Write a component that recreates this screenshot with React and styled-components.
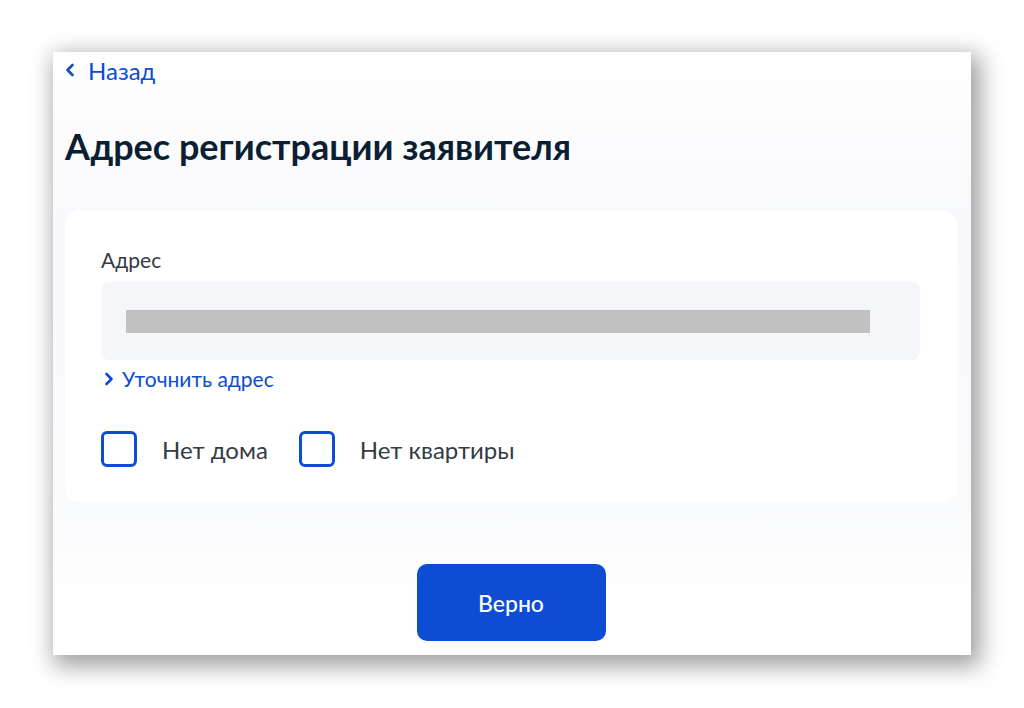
import React from 'react';
import styled, { createGlobalStyle } from 'styled-components';

const Global = createGlobalStyle`
  body {
    margin: 0;
    background: #ffffff;
    font-family: Lato, "Noto Sans", sans-serif;
  }
`;

const Page = styled.div`
  padding: 52px 0 53px 53px;
`;

const Frame = styled.div`
  width: 918px;
  height: 603px;
  box-sizing: border-box;
  background: linear-gradient(180deg, #ffffff 0%, #f7f8fb 30%, #f9fafc 75%, #ffffff 92%);
  box-shadow: 5px 7px 22px 4px rgba(0, 0, 0, 0.38);
  padding: 0 14px 0 12px;
  display: flex;
  flex-direction: column;
`;

const Back = styled.a`
  display: flex;
  align-items: center;
  gap: 13px;
  margin-top: 4px;
  height: 28px;
  color: #0d4cd3;
  font-size: 24px;
  text-decoration: none;
`;

const Title = styled.h1`
  margin: 40px 0 0;
  font-size: 36px;
  font-weight: 700;
  color: #0b1f33;
  line-height: 44px;
`;

const Card = styled.div`
  margin-top: 42px;
  height: 293px;
  box-sizing: border-box;
  background: #ffffff;
  border-radius: 16px;
  padding: 38px 37px 0 36px;
`;

const Label = styled.div`
  font-size: 21px;
  color: #333b44;
  line-height: 24px;
`;

const Field = styled.div`
  margin-top: 10px;
  height: 78px;
  border-radius: 8px;
  background: #f5f6fa;
  display: flex;
  align-items: center;
  padding: 0 50px 0 25px;
`;

const Redacted = styled.div`
  flex: 1;
  height: 23px;
  background: #c1c1c1;
`;

const More = styled.a`
  display: flex;
  align-items: center;
  gap: 8px;
  margin-top: 7px;
  padding-left: 3px;
  color: #0d4cd3;
  font-size: 21px;
  line-height: 24px;
  text-decoration: none;
`;

const Checks = styled.div`
  display: flex;
  align-items: center;
  gap: 31px;
  margin-top: 40px;
`;

const Check = styled.label`
  display: flex;
  align-items: center;
  gap: 25px;
  font-size: 24px;
  color: #333b44;
`;

const Box = styled.span`
  width: 36px;
  height: 36px;
  box-sizing: border-box;
  border: 3px solid #0d4cd3;
  border-radius: 6px;
`;

const Footer = styled.div`
  display: flex;
  justify-content: center;
  margin-top: 61px;
`;

const Button = styled.button`
  width: 189px;
  height: 77px;
  border: none;
  border-radius: 10px;
  background: #0d4cd3;
  color: #ffffff;
  font-family: Lato, "Noto Sans", sans-serif;
  font-size: 23px;
  font-weight: 500;
`;

const Chevron = ({ dir }) => (
  <svg width="10" height="14" viewBox="0 0 10 14" fill="none">
    <path
      d={dir === 'left' ? 'M7.5 2L2.5 7l5 5' : 'M2.5 2l5 5-5 5'}
      stroke="#0d4cd3"
      strokeWidth="2.6"
      strokeLinecap="round"
      strokeLinejoin="round"
    />
  </svg>
);

export default function App() {
  return (
    <Page>
      <Global />
      <Frame>
        <Back href="#">
          <Chevron dir="left" />
          Назад
        </Back>
        <Title>Адрес регистрации заявителя</Title>
        <Card>
          <Label>Адрес</Label>
          <Field>
            <Redacted />
          </Field>
          <More href="#">
            <Chevron dir="right" />
            Уточнить адрес
          </More>
          <Checks>
            <Check>
              <Box />
              Нет дома
            </Check>
            <Check>
              <Box />
              Нет квартиры
            </Check>
          </Checks>
        </Card>
        <Footer>
          <Button>Верно</Button>
        </Footer>
      </Frame>
    </Page>
  );
}
